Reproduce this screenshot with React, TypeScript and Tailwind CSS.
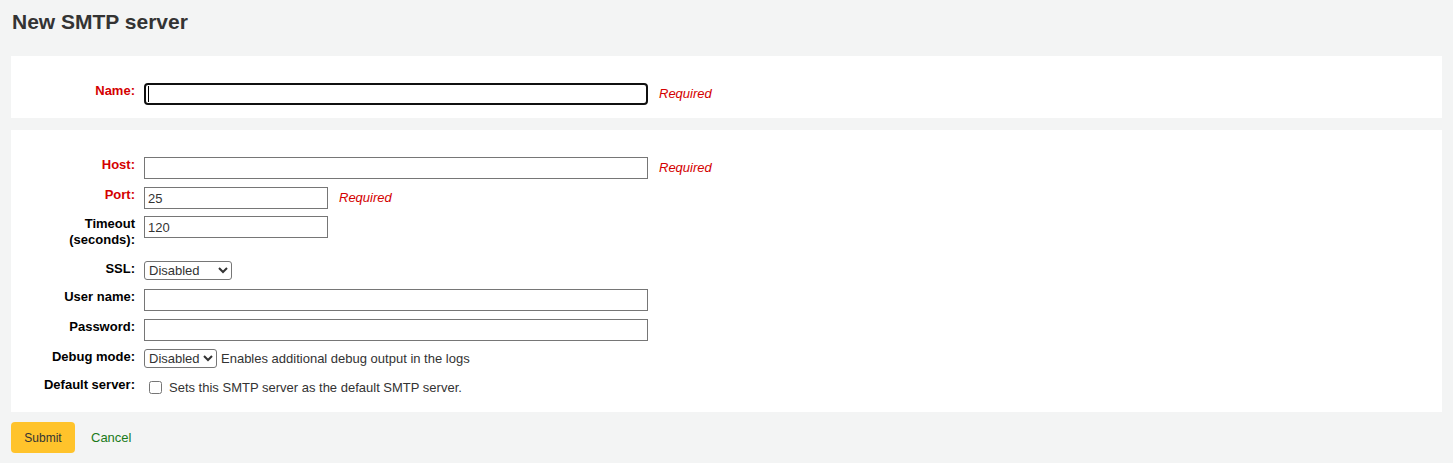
import React from 'react'

function Label({ text, required, className = '' }: { text: React.ReactNode; required?: boolean; className?: string }) {
  return (
    <label
      className={`w-[124px] shrink-0 text-right text-[13px] leading-4 font-bold ${required ? 'text-[#d40000]' : 'text-black'} ${className}`}
    >
      {text}
    </label>
  )
}

function Req() {
  return <span className="ml-[11px] text-[13px] italic text-[#d40000]">Required</span>
}

const inputCls = 'h-[22px] border border-[#767676] bg-white px-[3px] text-[13px] text-[#333]'
const selectCls = 'h-[19px] rounded-[3px] border border-[#767676] bg-white pl-0 text-[13px] text-[#333]'

export default function App() {
  return (
    <div className="min-h-[463px] bg-[#f3f4f4] px-[11px] pt-[10px] font-['Liberation_Sans',Arial,sans-serif] text-[#333]">
      <h1 className="pl-[1px] text-[21px] leading-6 font-bold text-[#333]">New SMTP server</h1>

      <div className="mt-[22px] h-[62px] bg-white pt-[27px]">
        <div className="flex items-start gap-[9px]">
          <Label text="Name:" required />
          <div className="flex items-center">
            <div className="relative">
              <input
                autoFocus
                className="block h-[22px] w-[504px] rounded-[4px] border-2 border-[#101010] bg-white px-[3px] text-[13px] outline-none"
              />
              <span className="absolute top-[3px] left-[4px] h-[16px] w-px bg-black" />
            </div>
            <Req />
          </div>
        </div>
      </div>

      <div className="mt-[12px] h-[282px] bg-white pt-[27px]">
        <div className="flex items-start gap-[9px]">
          <Label text="Host:" required />
          <div className="flex items-center">
            <input className={`${inputCls} w-[504px]`} />
            <Req />
          </div>
        </div>

        <div className="mt-[8px] flex items-start gap-[9px]">
          <Label text="Port:" required />
          <div className="flex items-center">
            <input className={`${inputCls} w-[184px]`} defaultValue="25" />
            <Req />
          </div>
        </div>

        <div className="mt-[7px] flex items-start gap-[9px]">
          <Label text={<>Timeout<br />(seconds):</>} />
          <input className={`${inputCls} w-[184px]`} defaultValue="120" />
        </div>

        <div className="mt-[13px] flex items-start gap-[9px]">
          <Label text="SSL:" />
          <select className={`${selectCls} w-[88px]`} defaultValue="disabled">
            <option value="disabled">Disabled</option>
            <option value="ssl">SSL</option>
            <option value="starttls">STARTTLS</option>
          </select>
        </div>

        <div className="mt-[9px] flex items-start gap-[9px]">
          <Label text="User name:" />
          <input className={`${inputCls} w-[504px]`} />
        </div>

        <div className="mt-[8px] flex items-start gap-[9px]">
          <Label text="Password:" />
          <input type="password" className={`${inputCls} w-[504px]`} />
        </div>

        <div className="mt-[8px] flex items-start gap-[9px]">
          <Label text="Debug mode:" />
          <div className="flex items-center">
            <select className={`${selectCls} w-[73px]`} defaultValue="disabled">
              <option value="disabled">Disabled</option>
              <option value="enabled">Enabled</option>
            </select>
            <span className="ml-[4px] text-[13px] text-[#333]">Enables additional debug output in the logs</span>
          </div>
        </div>

        <div className="mt-[8px] flex items-start gap-[9px]">
          <Label text="Default server:" />
          <div className="flex items-start">
            <input type="checkbox" className="mt-[4px] ml-[5px] h-[13px] w-[13px]" />
            <span className="mt-[3px] ml-[7px] text-[13px] leading-4 text-[#333]">Sets this SMTP server as the default SMTP server.</span>
          </div>
        </div>
      </div>

      <div className="mt-[10px] flex items-center">
        <button className="h-[31px] w-[64px] rounded-[4px] bg-[#ffc32b] text-[12px] text-[#333]">Submit</button>
        <a href="#" className="ml-[16px] text-[13px] text-[#1a7a1a]">Cancel</a>
      </div>
    </div>
  )
}
